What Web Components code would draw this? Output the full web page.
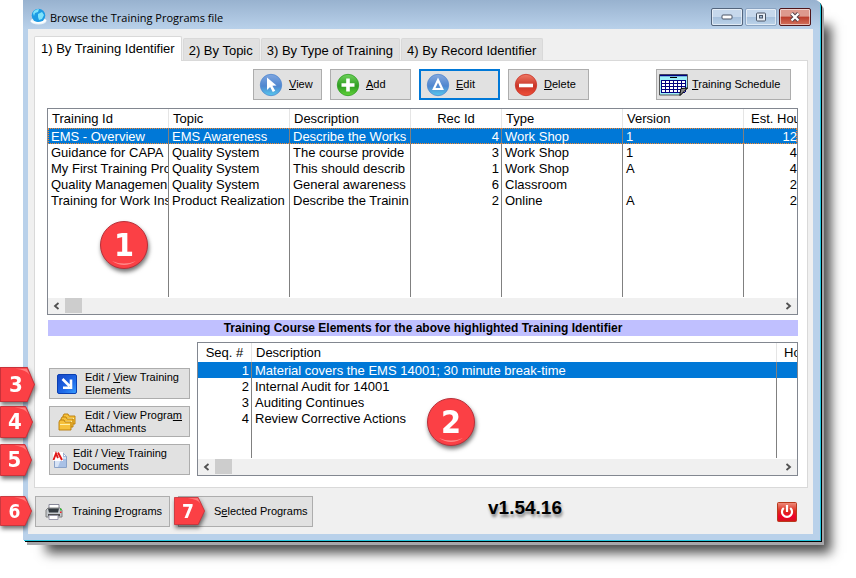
<!DOCTYPE html>
<html lang="en">
<head>
<meta charset="utf-8">
<title>Browse the Training Programs file</title>
<style>
  body { margin: 0; background: #fff; color: #000; font: 13px/16px "Liberation Sans", Arial, sans-serif; }
  .toolbar { display: flex; gap: 8px; padding: 0 7px 8px 206px; }
  .push { margin-left: auto; }
  .caption { margin: 5px 0 6px 1px; background: #c0c0ff; text-align: center; font-size: 12px; line-height: 16px; font-weight: bold; }
  .lower { display: grid; grid-template-columns: 141px 1fr; gap: 7px; padding-left: 2px; }
  .side { display: flex; flex-direction: column; gap: 7px; padding-top: 26px; }
  .holder { position: relative; }
  .footer { display: flex; gap: 8px; padding: 8px 16px 7px 1px; }
  .version { margin-left: 167px; font-size: 19px; line-height: 23px; font-weight: bold; text-shadow: 1px 3px 3px rgba(0,0,0,.45); }
  .power { margin-left: auto; align-self: center; }
</style>
</head>
<body>
<app-window heading="Browse the Training Programs file">
  <tab-panel tabs="1) By Training Identifier|2) By Topic|3) By Type of Training|4) By Record Identifier">
    <div class="toolbar">
      <push-button style="--w:69px" icon="view"><u>V</u>iew</push-button>
      <push-button style="--w:81px" icon="add"><u>A</u>dd</push-button>
      <push-button style="--w:81px" icon="edit" focused><u>E</u>dit</push-button>
      <push-button style="--w:81px" icon="delete"><u>D</u>elete</push-button>
      <push-button class="push" style="--w:135px;--pad:2px;--gap:4px" icon="calendar"><u>T</u>raining Schedule</push-button>
    </div>
    <div class="holder">
      <data-list id="programs"></data-list>
      <call-out kind="round" style="left:53px;top:113px">1</call-out>
    </div>
    <div class="caption">Training Course Elements for the above highlighted Training Identifier</div>
    <div class="lower">
      <div class="side">
        <div class="holder">
          <push-button style="--w:100%;--pad:7px;--gap:8px" icon="arrow">Edit / <u>V</u>iew Training<br>Elements</push-button>
          <call-out style="left:-49px;top:-1px;--cw:35px;--ch:35px;--fs:22px">3</call-out>
        </div>
        <div class="holder">
          <push-button style="--w:100%;--pad:7px;--gap:8px" icon="folders">Edit / View Progra<u>m</u><br>Attachments</push-button>
          <call-out style="left:-49px;top:0;--cw:33px;--ch:32px;--fs:22px">4</call-out>
        </div>
        <div class="holder">
          <push-button style="--w:100%;--pad:2px;--gap:5px" icon="document">Edit / Vie<u>w</u> Training<br>Documents</push-button>
          <call-out style="left:-49px;top:0;--cw:32px;--ch:32px;--fs:22px">5</call-out>
        </div>
      </div>
      <data-list id="elements"></data-list>
    </div>
    <call-out kind="round" style="left:392px;top:337px">2</call-out>
  </tab-panel>
  <div class="footer">
    <div class="holder">
      <push-button style="--w:135px;--pad:8px;--gap:8px" icon="printer">Training <u>P</u>rograms</push-button>
      <call-out style="left:-35px;top:0;--cw:32px;--ch:30px;--fs:19px">6</call-out>
    </div>
    <div class="holder">
      <push-button style="--w:135px;--pad:35px">S<u>e</u>lected Programs</push-button>
      <call-out style="left:-4px;top:1px;--cw:31px;--ch:28px;--fs:19px">7</call-out>
    </div>
    <div class="version">v1.54.16</div>
    <power-button class="power"></power-button>
  </div>
</app-window>

<script>
const ball = (a, b, c, inner) => `<svg width="24" height="24" viewBox="0 0 24 24"><defs><linearGradient id="g" x1="0" y1="0" x2="0" y2="1"><stop offset="0" stop-color="${a}"/><stop offset=".55" stop-color="${b}"/><stop offset="1" stop-color="${c}"/></linearGradient></defs><circle cx="12" cy="12" r="10.7" fill="url(#g)" stroke="${b}" stroke-width=".8"/>${inner}</svg>`;
const folder = (x, y) => `<path d="M${x} ${y + 2}l1-2h4l1 2h6v8H${x}z" fill="#f6c13c" stroke="#b97a08" stroke-width=".9"/><path d="M${x + 1} ${y + 4}h10v1H${x + 1}z" fill="#fff0a8"/>`;
const calendarGrid = () => {
  let d = '';
  for (let x = 2; x <= 26; x += 4) d += `M${x}.5 6v12`;
  for (let y = 6; y <= 18; y += 3) d += `M2 ${y}.5h24`;
  return d;
};
const ICONS = {
  view: ball('#7fa6e0', '#4f86cf', '#55c8ee', '<path d="M8 4.500l9.500 8-4.100.3 2.800 5-2.400 1.300-2.700-5.100L8 17z" fill="#fff"/>'),
  add: ball('#6fd35c', '#2f9d22', '#63d43a', '<path d="M12 5.500v13M5.500 12h13" stroke="#fff" stroke-width="3.600"/>'),
  edit: ball('#86a9de', '#4f86cf', '#55c8ee', '<path d="M12 7l4.200 9H7.800z" fill="none" stroke="#fff" stroke-width="2.200"/>'),
  delete: ball('#f07a66', '#c93427', '#f0503a', '<path d="M5 12.500h14" stroke="#fff" stroke-width="3.600"/>'),
  calendar: `<svg width="29" height="22" viewBox="0 0 29 22"><path d="M.5.500h28V14l-7 7H.5z" fill="#9df0fa" stroke="#555"/><path d="M1 1.500h27" stroke="#000080" stroke-width="1.500"/><path d="M11 3.500h7" stroke="#000" stroke-width="1"/><path d="M2 6h25v12H2z" fill="#fff"/><path d="${calendarGrid()}" stroke="#000080" stroke-width="1"/><path d="M21 21.500v-2l1-5 6.500-.5z" fill="#888" stroke="#000"/></svg>`,
  arrow: `<svg width="20" height="20" viewBox="0 0 20 20"><defs><linearGradient id="g" x1="0" y1="0" x2="1" y2="1"><stop offset="0" stop-color="#1644c4"/><stop offset=".6" stop-color="#1f6ae8"/><stop offset="1" stop-color="#39a0ff"/></linearGradient></defs><rect x=".5" y=".5" width="19" height="19" rx="1.500" fill="url(#g)" stroke="#0b3fb0"/><path d="M5.500 5l7 7M14 5.500v8.200H6" fill="none" stroke="#fff" stroke-width="2.600"/></svg>`,
  folders: `<svg width="20" height="20" viewBox="0 0 20 20">${folder(6, 2)}${folder(4, 5)}${folder(2, 8)}</svg>`,
  document: `<svg width="16" height="20" viewBox="0 0 16 20"><path d="M2.500 3.500h9l3 3v11h-12z" fill="#d7e3f5" stroke="#8aa2c8"/><path d="M9 9h5v8H6z" fill="#a9c1e6"/><path d="M11.500 3.500v3h3z" fill="#fff" stroke="#8aa2c8" stroke-width=".7"/><rect x="1" y="2" width="10" height="9" fill="#fff"/><path d="M1.500 10L4 3.500 6 8M6 2.500L10 10" fill="none" stroke="#e01818" stroke-width="1.900"/></svg>`,
  printer: `<svg width="20" height="20" viewBox="0 0 20 20"><path d="M5 2.500h10v5H5z" fill="#fff" stroke="#889"/><path d="M2 8l2-2h12l2 2v7H2z" fill="#c4c8cc" stroke="#777" stroke-width=".9"/><path d="M4 6.500h11l-1 4H5z" fill="#333a40"/><path d="M4 13h12" stroke="#333" stroke-width="1.600"/><path d="M5 13.500h9v4H5z" fill="#fff" stroke="#99a"/><path d="M16 6.500h1.500v2H16z" fill="#2ec42e"/><path d="M16 9.500h1.500v1.500H16z" fill="#e22"/></svg>`
};

class Base extends HTMLElement {
  paint(html) {
    if (!this.shadowRoot) this.attachShadow({ mode: 'open' });
    this.shadowRoot.innerHTML = html;
  }
}

customElements.define('app-window', class extends Base {
  connectedCallback() {
    this.paint(`<style>
      :host { display: block; margin: 0 36px 36px 23px; border-radius: 0 5px 0 0; padding: 0 7px 6px 5px;
        box-shadow: 1px 1px 0 #22c5de, 2px 2px 0 #000, 4px 5px 0 #a6a6aa, 17px 19px 11px -6px rgba(0,0,0,.7);
        background: linear-gradient(#98b2cf 0, #b9d1ea 29px); }
      header { display: flex; align-items: center; gap: 3px; height: 29px; padding: 0 2px; }
      h1 { flex: 1; margin: 0; padding-top: 6px; font: 11px/16px "Open Sans", sans-serif; }
      .globe { padding-top: 4px; }
      svg { display: block; }
      nav { display: flex; gap: 2px; padding-top: 4px; }
      nav button { box-sizing: border-box; width: 32px; height: 18px; padding: 0; border: 1px solid #53657d; border-radius: 2px; display: grid; place-items: center;
        background: linear-gradient(#c6d8ec 50%, #a6c0dc 50%, #bcd3ea); box-shadow: inset 0 0 0 1px rgba(255,255,255,.55); }
      nav button.dim { border-color: #8ba4c2; }
      nav button.close { border-color: #50161a; background: linear-gradient(#dd9a8e 45%, #bb3d2b 50%, #d2715c); }
      main { background: #f0f0f0; padding: 7px 5px 0 6px; }
      ::slotted(.footer) { margin-right: -5px; }
    </style>
    <header>
      <svg class="globe" width="17" height="17" viewBox="0 0 17 17"><ellipse cx="8.500" cy="13" rx="8" ry="3.500" fill="#e8f4fb"/><circle cx="8.500" cy="7.500" r="6.800" fill="#1d9be4"/><path d="M3 5c1-3 4-4 6-4l-1 3-3 1-1 3zM8 6l4-2 2 3-2 4-3 1-1-3z" fill="#7fe3fb"/><path d="M1 13c3 2 11 3 15-1" fill="none" stroke="#fff" stroke-width="1.500"/></svg>
      <h1>${this.getAttribute('heading')}</h1>
      <nav>
        <button aria-label="Minimize"><svg width="12" height="6"><rect x="1" y="1" width="10" height="4" rx="1" fill="#fff" stroke="#4a5566"/></svg></button>
        <button class="dim" aria-label="Maximize"><svg width="12" height="10"><rect x="1.500" y="1" width="9" height="8" rx="1" fill="#e6edf5" stroke="#4a5566"/><rect x="4.500" y="3.500" width="3" height="2.500" fill="#9fb8d4" stroke="#4a5566"/></svg></button>
        <button class="close" aria-label="Close"><svg width="12" height="10" viewBox="0 0 12 10"><path d="M2.500 1.500l7 7m0-7l-7 7" stroke="#55434a" stroke-width="4"/><path d="M2.500 1.500l7 7m0-7l-7 7" stroke="#fff" stroke-width="2.200"/></svg></button>
      </nav>
    </header>
    <main><slot></slot></main>`);
  }
});

customElements.define('tab-panel', class extends Base {
  connectedCallback() {
    const tabs = this.getAttribute('tabs').split('|')
      .map((t, i) => `<button role="tab" aria-selected="${i === 0}">${t}</button>`).join('');
    this.paint(`<style>
      :host { display: block; }
      [role=tablist] { display: flex; align-items: flex-end; gap: 1px; height: 24px; }
      button { box-sizing: border-box; height: 22px; padding: 2px 6px 0 5px; border: 1px solid #d9d9d9; border-bottom: 0; border-radius: 2px 2px 0 0; background: #e1e1e1; color: #000; font: 13px/18px "Liberation Sans", Arial, sans-serif; white-space: nowrap; }
      button[aria-selected=true] { position: relative; z-index: 1; height: 25px; margin-bottom: -1px; padding: 0 6px; background: #fff; }
      section { position: relative; border: 1px solid #d9d9d9; background: #fff; padding: 8px 9px 11px 12px; }
    </style>
    <div role="tablist">${tabs}</div><section><slot></slot></section>`);
  }
});

customElements.define('push-button', class extends Base {
  connectedCallback() {
    const icon = ICONS[this.getAttribute('icon')] || '';
    this.paint(`<style>
      :host { display: block; width: var(--w); }
      button { box-sizing: border-box; width: 100%; height: 31px; display: flex; align-items: center; gap: var(--gap, 6px); padding: 0 0 0 var(--pad, 5px);
        border: 1px solid #adadad; background: #e1e1e1; color: #000; font: 11px/13px "Liberation Sans", Arial, sans-serif; text-align: left; white-space: nowrap; }
      :host([focused]) button { border: 2px solid #0078d7; }
      svg { display: block; flex: none; }
    </style><button>${icon}<span><slot></slot></span></button>`);
  }
});

customElements.define('power-button', class extends Base {
  connectedCallback() {
    this.paint(`<style>
      :host { display: block; }
      button { display: block; width: 20px; height: 20px; padding: 0; border: 0; background: none; }
      svg { display: block; }
    </style><button aria-label="Exit"><svg width="20" height="20" viewBox="0 0 20 20"><defs><linearGradient id="g" x1="0" y1="0" x2="0" y2="1"><stop offset="0" stop-color="#ee9080"/><stop offset=".45" stop-color="#dc2a1c"/><stop offset=".75" stop-color="#f0002c"/><stop offset="1" stop-color="#d01818"/></linearGradient></defs><rect x=".5" y=".5" width="19" height="19" rx="1" fill="url(#g)" stroke="#b83a1c"/><path d="M6.800 6a5 5 0 1 0 6.400 0" fill="none" stroke="#fff" stroke-width="2.200"/><path d="M10 3v7" stroke="#fff" stroke-width="2.200"/></svg></button>`);
  }
});

customElements.define('call-out', class extends Base {
  connectedCallback() {
    const round = this.getAttribute('kind') === 'round';
    const shape = round
      ? '<svg viewBox="0 0 48 48"><circle cx="24" cy="24" r="23.500" fill="#fb4045" stroke="#b8303a"/><path d="M12 40q12 8 24 0-12 5-24 0" fill="#ff8a8a"/></svg>'
      : '<svg viewBox="0 0 34 32" preserveAspectRatio="none"><path d="M.5.500H26.500L33.500 16 26.500 31.500H.5z" fill="#fb4045" stroke="#c8323a"/><path d="M15 1.500h11l3 6q-3-5-14-6" fill="#ff7d7d"/></svg>';
    this.paint(`<style>
      :host { position: absolute; display: grid; place-items: center; width: var(--cw, 48px); height: var(--ch, 48px); color: #fff;
        font: bold var(--fs, 32px)/1 "DejaVu Sans Condensed", "DejaVu Sans", sans-serif; filter: drop-shadow(1px 3px 2px rgba(0,0,0,.55)); pointer-events: none; z-index: 2; }
      :host(:not([kind])) span { padding-right: 3px; }
      svg { position: absolute; inset: 0; width: 100%; height: 100%; display: block; }
      span { position: relative; }
    </style>${shape}<span><slot></slot></span>`);
  }
});

customElements.define('scroll-bar', class extends Base {
  connectedCallback() {
    this.paint(`<style>
      :host { display: flex; height: 16px; margin-top: 1px; background: #f0f0f0; }
      button { width: 17px; padding: 0; border: 0; background: none; display: grid; place-items: center; }
      i { width: 17px; height: 15px; background: #cdcdcd; margin-right: auto; }
      svg { display: block; }
    </style><button aria-label="Scroll left"><svg width="7" height="8" viewBox="0 0 7 8"><path d="M5.500 1L2 4l3.500 3" fill="none" stroke="#505050" stroke-width="1.800"/></svg></button><i></i><button aria-label="Scroll right"><svg width="7" height="8" viewBox="0 0 7 8"><path d="M1.500 1L5 4 1.500 7" fill="none" stroke="#505050" stroke-width="1.800"/></svg></button>`);
  }
});

customElements.define('data-list', class extends Base {
  set data({ cols, rows, filler, focus }) {
    const cls = c => c.num ? ' class="num"' : '';
    this.paint(`<style>
      :host { display: block; border: 1px solid #828790; background: #fff; min-width: 0; }
      table { table-layout: fixed; width: 100%; border-spacing: 0; font: 13px/14px "Liberation Sans", Arial, sans-serif; }
      th, td { box-sizing: border-box; height: 16px; padding: 2px 0 0 3px; border-right: 1px solid #808080; text-align: left; font-weight: normal; white-space: nowrap; overflow: hidden; }
      th { height: 19px; padding: 0 0 0 4px; border-color: #e5e5e5; }
      th.num { text-align: center; padding: 0; }
      td.num { text-align: right; padding: 2px 2px 0 0; }
      th:last-child, td:last-child { border-right: 0; }
      th.num:last-child { text-align: left; padding-left: 7px; }
      td.num:last-child { padding-right: 0; }
      tr.sel { background: #0078d7; color: #fff; }
      tr.focus { outline: 1px dotted #ff8728; outline-offset: -1px; }
      tr.fill td { height: ${filler}px; }
    </style>
    <table>
      <colgroup>${cols.map(c => `<col${c.w ? ` style="width:${c.w}px"` : ''}>`).join('')}</colgroup>
      <thead><tr>${cols.map(c => `<th${cls(c)}>${c.t}</th>`).join('')}</tr></thead>
      <tbody>${rows.map((r, i) => `<tr class="${i ? '' : focus ? 'sel focus' : 'sel'}">${r.map((v, j) => `<td${cls(cols[j])}>${v}</td>`).join('')}</tr>`).join('')}
      <tr class="fill">${cols.map(() => '<td></td>').join('')}</tr></tbody>
    </table><scroll-bar></scroll-bar>`);
  }
});

document.getElementById('programs').data = {
  cols: [{ t: 'Training Id', w: 121 }, { t: 'Topic', w: 121 }, { t: 'Description', w: 121 }, { t: 'Rec Id', w: 91, num: 1 }, { t: 'Type', w: 121 }, { t: 'Version', w: 121 }, { t: 'Est. Hou', num: 1 }],
  rows: [
    ['EMS - Overview', 'EMS Awareness', 'Describe the Works', 4, 'Work Shop', '1', 12],
    ['Guidance for CAPA', 'Quality System', 'The course provide', 3, 'Work Shop', '1', 4],
    ['My First Training Pro', 'Quality System', 'This should describ', 1, 'Work Shop', 'A', 4],
    ['Quality Managemen', 'Quality System', 'General awareness', 6, 'Classroom', '', 2],
    ['Training for Work Ins', 'Product Realization', 'Describe the Trainin', 2, 'Online', 'A', 2]
  ],
  filler: 89, focus: true
};
document.getElementById('elements').data = {
  cols: [{ t: 'Seq. #', w: 54, num: 1 }, { t: 'Description' }, { t: 'Ho', w: 20, num: 1 }],
  rows: [
    [1, 'Material covers the EMS 14001; 30 minute break-time', ''],
    [2, 'Internal Audit for 14001', ''],
    [3, 'Auditing Continues', ''],
    [4, 'Review Corrective Actions', '']
  ],
  filler: 32
};
</script>
</body>
</html>
